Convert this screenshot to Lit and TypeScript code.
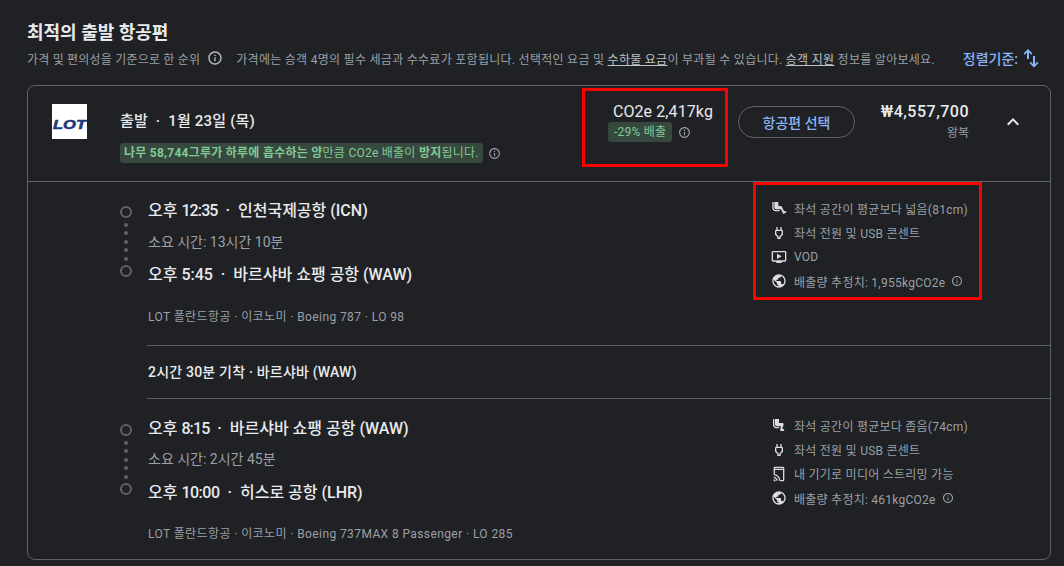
import { LitElement, html, css, svg } from "lit";
import { customElement } from "lit/decorators.js";

const P = {
  legExtra: "M4 12V3H2v9c0 2.76 2.24 5 5 5h6v-2H7c-1.66 0-3-1.34-3-3zm18.83 5.24c-.38-.72-1.29-.97-2.03-.63l-1.09.5-3.41-6.98c-.34-.68-1.03-1.12-1.79-1.12L11 9V3H5v8c0 1.66 1.34 3 3 3h7l3.41 7 3.72-1.7c.77-.36 1.1-1.3.7-2.06z",
  legReduced: "M19.97 19.2c.18.96-.55 1.8-1.47 1.8H14v-3l1-4H9c-1.65 0-3-1.35-3-3V3h6v6h5c1.1 0 2 .9 2 2l-2 7h1.44c.73 0 1.39.49 1.53 1.2zM5 12V3H3v9c0 2.76 2.24 5 5 5h4v-2H8c-1.66 0-3-1.34-3-3z",
  power: "M16.01 7L16 3h-2v4h-4V3H8v4h-.01C7 7 6 8 6 9v5.49L9.5 18v3h5v-3l3.5-3.5V9c0-1-1-2-1.99-2zM16 13.66l-3.5 3.51V19h-1v-1.83L8 13.65V9.01h8v4.65z",
  video: "M21 3H3c-1.11 0-2 .89-2 2v12c0 1.1.89 2 2 2h5v2h8v-2h5c1.1 0 1.99-.9 1.99-2L23 5c0-1.11-.9-2-2-2zm0 14H3V5h18v12zM16 11l-7 4V7z",
  globe: "M12 2C6.48 2 2 6.48 2 12s4.48 10 10 10 10-4.48 10-10S17.52 2 12 2zm-1 17.93c-3.95-.49-7-3.85-7-7.93 0-.62.08-1.21.21-1.79L9 15v1c0 1.1.9 2 2 2v1.93zm6.9-2.54c-.26-.81-1-1.39-1.9-1.39h-1v-3c0-.55-.45-1-1-1H8v-2h2c.55 0 1-.45 1-1V7h2c1.1 0 2-.9 2-2v-.41c2.93 1.19 5 4.06 5 7.41 0 2.08-.8 3.97-2.1 5.39z",
  stream: "M18 1H6C4.9 1 4 1.9 4 3v9h2V6h12v15h-4v2h4c1.1 0 2-.9 2-2V3c0-1.1-.9-2-2-2zM6 3h12v1H6zM4 16v2c2.2 0 4 1.800 4 4h2c0-3.300-2.700-6-6-6zm0 4v3h3c0-1.700-1.300-3-3-3zm0-8v2c4.400 0 8 3.600 8 8h2c0-5.500-4.500-10-10-10z",
  info: "M11 7h2v2h-2zm0 4h2v6h-2zm1-9C6.48 2 2 6.48 2 12s4.48 10 10 10 10-4.48 10-10S17.52 2 12 2zm0 18c-4.41 0-8-3.59-8-8s3.59-8 8-8 8 3.59 8 8-3.59 8-8 8z",
  chevron: "M12 8l-6 6 1.41 1.41L12 10.83l4.59 4.58L18 14z",
};

const icon = (d: string, cls = "ic") => html`<svg class=${cls} viewBox="0 0 24 24" fill="currentColor">${svg`<path d=${d}></path>`}</svg>`;

@customElement("app-root")
export class AppRoot extends LitElement {
  static styles = css`
    :host {
      display: block;
      width: 1064px;
      height: 566px;
      overflow: hidden;
      background: #202124;
      color: #e8eaed;
      font-family: Roboto, "Noto Sans CJK KR", sans-serif;
    }
    .page { padding: 21px 13px 0 27px; position: relative; }
    h1 { margin: 0; font-size: 18px; line-height: 24px; font-weight: 700; color: #e8eaed; }
    .sub {
      display: flex; align-items: center; height: 28px; margin-top: -1px;
      font-size: 12px; letter-spacing: .2px; color: #9aa0a6; white-space: nowrap;
    }
    .sub .i { width: 16px; height: 16px; margin: 0 13px 0 7px; color: #bdc1c6; flex: none; }
    .sub .long { letter-spacing: .28px; }
    .sub a { color: #bdc1c6; text-decoration: underline; }
    .sort {
      margin-left: auto; display: flex; align-items: center; gap: 3px;
      color: #8ab4f8; font-size: 14px; letter-spacing: 0; font-weight: 500; margin-right: 10px;
    }
    .sort svg { width: 20px; height: 20px; }
    .card { margin-top: 13px; border: 1px solid #5f6368; border-radius: 8px; height: 475px; box-sizing: border-box; }
    .head { display: flex; height: 95px; border-bottom: 1px solid #5f6368; box-sizing: content-box; }
    .logo { width: 35px; height: 35px; background: #fff; margin: 18px 0 0 24px; flex: none; display: flex; }
    .logo svg { width: 35px; height: 35px; }
    .htext { margin-left: 33px; width: 462px; flex: none; }
    .htitle { margin-top: 24px; font-size: 15px; letter-spacing: .2px; line-height: 22px; font-weight: 500; white-space: pre; }
    .note { display: flex; align-items: center; margin-top: 11px; }
    .tag { background: #37493f; color: #81c995; border-radius: 3px; font-size: 12px; letter-spacing: .25px; line-height: 20px; padding: 0 4px; white-space: nowrap; }
    .tag b { font-weight: 700; }
    .note .i { width: 13px; height: 13px; margin-left: 5px; color: #9aa0a6; }
    .co2 { width: 131px; flex: none; padding-top: 15px; box-sizing: border-box; display: flex; flex-direction: column; align-items: flex-end; }
    .co2 .v { font-size: 16px; letter-spacing: .1px; line-height: 21px; color: #e8eaed; }
    .co2 .row { display: flex; align-items: center; }
    .co2 .row .tag { padding: 0 6px; width: 64px; box-sizing: border-box; text-align: center; }
    .co2 .row .i { width: 13px; height: 13px; margin: 0 22px 0 6px; color: #9aa0a6; }
    .btn {
      flex: none; box-sizing: border-box; width: 117px; height: 32px; margin: 20px 0 0 25px;
      border: 1px solid #5f6368; border-radius: 16px; color: #8ab4f8; font-size: 14px; font-weight: 500;
      display: flex; align-items: center; justify-content: center;
    }
    .price { width: 114px; flex: none; text-align: right; padding-top: 15px; box-sizing: border-box; }
    .price .p { font-size: 16px; letter-spacing: .5px; line-height: 22px; font-weight: 500; color: #e8eaed; }
    .price .w { font-size: 12px; line-height: 20px; color: #9aa0a6; }
    .chev { width: 24px; height: 24px; margin: 24px 0 0 32px; color: #e8eaed; flex: none; }
    .leg { display: flex; height: 163px; }
    .leg.second { height: 160px; }
    .tl { width: 120px; flex: none; display: flex; flex-direction: column; align-items: center; padding: 24px 0 0 76px; box-sizing: border-box; }
    .second .tl { padding-top: 25px; }
    .tl .c { width: 8px; height: 8px; border: 2px solid #5f6368; border-radius: 50%; flex: none; }
    .tl .d { width: 4px; height: 4px; border-radius: 50%; background: #5f6368; margin-top: 4.55px; flex: none; }
    .tl .d:first-of-type { margin-top: 4px; }
    .tl .c.end { margin-top: 4px; }
    .body { width: 623px; flex: none; padding-top: 16px; box-sizing: border-box; }
    .second .body { padding-top: 17px; }
    .line { font-size: 16px; line-height: 26px; font-weight: 500; color: #e8eaed; white-space: pre; }
    .line .n1 { letter-spacing: -.9px; }
    .line .n2 { letter-spacing: -.5px; }
    .dur { font-size: 14px; line-height: 26px; color: #9aa0a6; margin: 5px 0 7px; }
    .second .dur { margin: 4px 0 8px; }
    .meta { font-size: 12px; letter-spacing: .4px; line-height: 20px; color: #9aa0a6; margin-top: 19px; white-space: pre; }
    .second .meta { margin-top: 18px; }
    .amen { padding-top: 14px; font-size: 12px; letter-spacing: .25px; color: #9aa0a6; }
    .amen .r { display: flex; align-items: center; height: 24.4px; gap: 7px; white-space: nowrap; }
    .amen .ic { width: 16px; height: 16px; color: #dadce0; flex: none; }
    .amen .i { width: 12px; height: 12px; color: #9aa0a6; margin-left: -1px; }
    .stop {
      margin-left: 119px; border-top: 1px solid #5f6368; border-bottom: 1px solid #5f6368;
      box-sizing: border-box; height: 54px; padding: 0 0 3px 1px;
      display: flex; align-items: center; font-size: 14px; letter-spacing: .2px; font-weight: 500; color: #e8eaed;
    }
    .mark { position: absolute; border: 3px solid #f00; box-sizing: border-box; }
    .m1 { left: 582px; top: 88px; width: 146px; height: 79px; }
    .m2 { left: 753px; top: 182px; width: 229px; height: 118px; }
  `;

  private amen(rows: [string, string, boolean?][]) {
    return html`<div class="amen">${rows.map(([d, t, inf]) => html`<div class="r">${icon(d)}<span>${t}</span>${inf ? icon(P.info, "i") : ""}</div>`)}</div>`;
  }

  private timeline() {
    return html`<div class="tl"><div class="c"></div><div class="d"></div><div class="d"></div><div class="d"></div><div class="d"></div><div class="d"></div><div class="c end"></div></div>`;
  }

  render() {
    return html`<div class="page">
      <h1>최적의 출발 항공편</h1>
      <div class="sub">
        <span>가격 및 편의성을 기준으로 한 순위</span>${icon(P.info, "i")}
        <span class="long">가격에는 승객 4명의 필수 세금과 수수료가 포함됩니다. 선택적인 요금 및 <a>수하물 요금</a>이 부과될 수 있습니다. <a>승객 지원</a> 정보를 알아보세요.</span>
        <div class="sort">정렬기준:<svg viewBox="0 0 20 20" fill="currentColor"><path d="M7 1L2.500 5.500 3.700 6.700 6 4.500V11H8V4.500L10.300 6.700 11.500 5.500ZM13 19.500L8.500 15 9.700 13.800 12 16V8H14V16L16.300 13.800 17.500 15Z"></path></svg></div>
      </div>
      <div class="card">
        <div class="head">
          <div class="logo"><svg viewBox="0 0 35 35"><text x="1" y="25" font-family="Liberation Sans" font-weight="700" font-style="italic" font-size="13.5" fill="#1d3a7c" stroke="#1d3a7c" stroke-width=".6" textLength="33" lengthAdjust="spacingAndGlyphs">LOT</text></svg></div>
          <div class="htext">
            <div class="htitle">출발  ·  1월 23일 (목)</div>
            <div class="note"><div class="tag"><b>나무 58,744그루가 하루에 흡수하는 양</b>만큼 CO2e 배출이 <b>방지</b>됩니다.</div>${icon(P.info, "i")}</div>
          </div>
          <div class="co2">
            <div class="v">CO2e 2,417kg</div>
            <div class="row"><div class="tag">-29% 배출</div>${icon(P.info, "i")}</div>
          </div>
          <div class="btn">항공편 선택</div>
          <div class="price"><div class="p">₩4,557,700</div><div class="w">왕복</div></div>
          ${icon(P.chevron, "chev")}
        </div>
        <div class="leg">
          ${this.timeline()}
          <div class="body">
            <div class="line">오후 <span class="n1">12:35</span>  ·  인천국제공항 (ICN)</div>
            <div class="dur">소요 시간: 13시간 10분</div>
            <div class="line">오후 5:45  ·  바르샤바 쇼팽 공항 (WAW)</div>
            <div class="meta">LOT 폴란드항공 · 이코노미 · Boeing 787 · LO 98</div>
          </div>
          ${this.amen([[P.legExtra, "좌석 공간이 평균보다 넓음(81cm)"], [P.power, "좌석 전원 및 USB 콘센트"], [P.video, "VOD"], [P.globe, "배출량 추정치: 1,955kgCO2e", true]])}
        </div>
        <div class="stop"><span>2시간 30분 기착 · 바르샤바 (WAW)</span></div>
        <div class="leg second">
          ${this.timeline()}
          <div class="body">
            <div class="line">오후 <span class="n1">8:15</span>  ·  바르샤바 쇼팽 공항 (WAW)</div>
            <div class="dur">소요 시간: 2시간 45분</div>
            <div class="line">오후 <span class="n2">10:00</span>  ·  히스로 공항 (LHR)</div>
            <div class="meta">LOT 폴란드항공 · 이코노미 · Boeing 737MAX 8 Passenger · LO 285</div>
          </div>
          ${this.amen([[P.legReduced, "좌석 공간이 평균보다 좁음(74cm)"], [P.power, "좌석 전원 및 USB 콘센트"], [P.stream, "내 기기로 미디어 스트리밍 가능"], [P.globe, "배출량 추정치: 461kgCO2e", true]])}
        </div>
      </div>
      <div class="mark m1"></div>
      <div class="mark m2"></div>
    </div>`;
  }
}
